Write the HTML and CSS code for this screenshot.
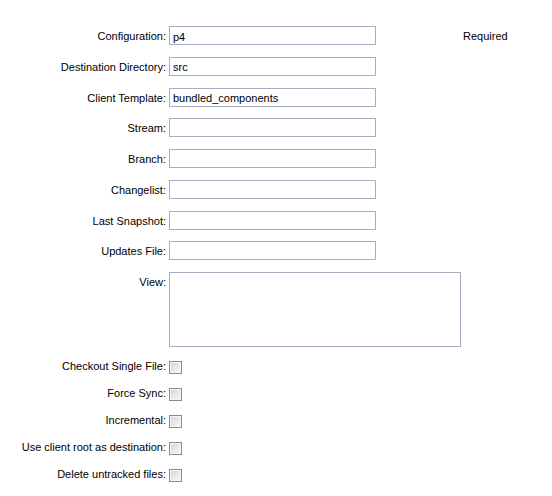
FILE: index.html
```html
<!DOCTYPE html>
<html>
<head>
<meta charset="utf-8">
<link rel="stylesheet" href="styles.css">
</head>
<body>
<div class="form">
  <div class="fields">
    <label class="lbl">Configuration:</label>
    <input class="txt" type="text" value="p4">
    <span class="note">Required</span>

    <label class="lbl">Destination Directory:</label>
    <input class="txt" type="text" value="src">
    <span></span>

    <label class="lbl">Client Template:</label>
    <input class="txt" type="text" value="bundled_components">
    <span></span>

    <label class="lbl">Stream:</label>
    <input class="txt" type="text">
    <span></span>

    <label class="lbl">Branch:</label>
    <input class="txt" type="text">
    <span></span>

    <label class="lbl">Changelist:</label>
    <input class="txt" type="text">
    <span></span>

    <label class="lbl">Last Snapshot:</label>
    <input class="txt" type="text">
    <span></span>

    <label class="lbl">Updates File:</label>
    <input class="txt" type="text">
    <span></span>

    <label class="lbl">View:</label>
    <textarea class="area"></textarea>
    <span></span>
  </div>
  <div class="checks">
    <label class="lbl">Checkout Single File:</label>
    <input class="chk" type="checkbox">

    <label class="lbl">Force Sync:</label>
    <input class="chk" type="checkbox">

    <label class="lbl">Incremental:</label>
    <input class="chk" type="checkbox">

    <label class="lbl">Use client root as destination:</label>
    <input class="chk" type="checkbox">

    <label class="lbl">Delete untracked files:</label>
    <input class="chk" type="checkbox">
  </div>
</div>
</body>
</html>
```

FILE: styles.css
```css
html, body {
  background: #ffffff;
}
body {
  margin: 8px;
  font-family: "Liberation Sans", Arial, sans-serif;
  font-size: 11px;
  color: #000000;
}
.form {
  padding-top: 18px;
}
.fields {
  display: grid;
  grid-template-columns: 158px 292px auto;
  column-gap: 3px;
  row-gap: 11.75px;
  align-items: start;
}
.checks {
  display: grid;
  grid-template-columns: 158px auto;
  column-gap: 3px;
  row-gap: 8px;
  margin-top: 9px;
  align-items: start;
}
.lbl {
  text-align: right;
  line-height: 18px;
  padding-top: 1px;
  white-space: nowrap;
}
.note {
  line-height: 18px;
  padding-top: 1px;
  margin-left: -1px;
  white-space: nowrap;
}
.txt {
  box-sizing: border-box;
  width: 207px;
  height: 19px;
  margin: 0;
  border: 1px solid #a9adc0;
  padding: 2px 2px 0 3px;
  font-family: "Liberation Sans", Arial, sans-serif;
  font-size: 11px;
  color: #000000;
  background: #ffffff;
  outline: none;
}
.area {
  box-sizing: border-box;
  width: 292px;
  height: 75px;
  margin: 0;
  border: 1px solid #a9adc0;
  padding: 2px 3px;
  font-family: "Liberation Sans", Arial, sans-serif;
  font-size: 11px;
  resize: none;
  background: #ffffff;
  outline: none;
  display: block;
}
.chk {
  -webkit-appearance: none;
  appearance: none;
  box-sizing: border-box;
  width: 13px;
  height: 13px;
  margin: 5px 0 0 0;
  border: 1px solid #8a8b8b;
  box-shadow: inset 0 0 0 1px #f6f6f6;
  background: linear-gradient(135deg, #d2d2d2 0%, #e9e9e9 55%, #fbfbfb 100%);
  display: block;
}
```
